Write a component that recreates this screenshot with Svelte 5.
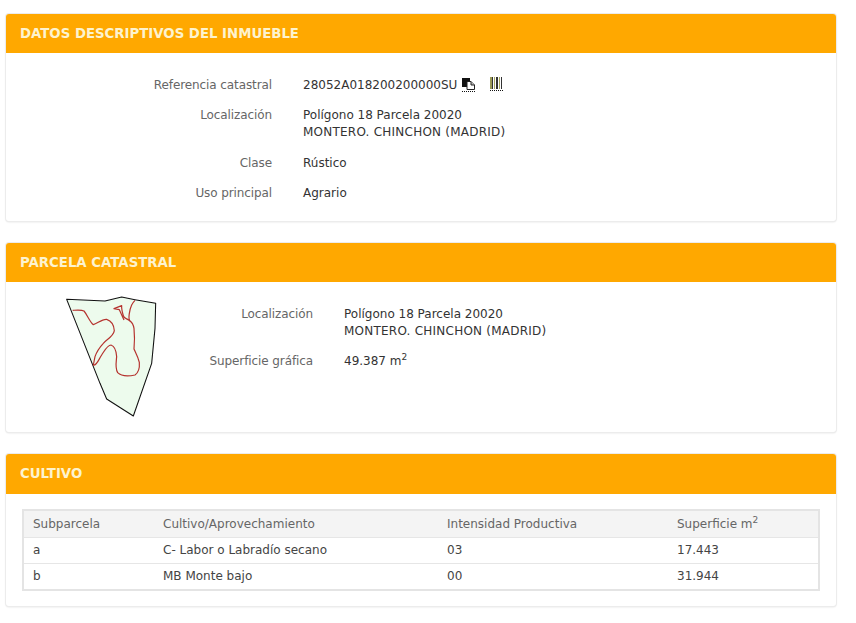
<script>
  const cropRows = [
    { sub: 'a', cultivo: 'C- Labor o Labradío secano', intensidad: '03', superficie: '17.443' },
    { sub: 'b', cultivo: 'MB Monte bajo', intensidad: '00', superficie: '31.944' }
  ];
  const bars = [
    [0, 2, '#9a9a55'], [2, 1, '#333'], [4, 1, '#a8a860'], [6, 2, '#333'], [9, 1, '#a8a860'], [11, 1, '#333']
  ];
</script>

<main class="page">
  <section class="card">
    <h2>DATOS DESCRIPTIVOS DEL INMUEBLE</h2>
    <dl class="fields first">
      <dt>Referencia catastral</dt>
      <dd class="ref">
        <span>28052A018200200000SU</span>
        <a class="icon copy" href="#copy" aria-label="Copiar">
          <svg width="13" height="12" viewBox="0 0 13 12">
            <rect x="0" y="0" width="8" height="9" fill="#111" />
            <path d="M5 3.5h4l3.5 3.5v4.5H5z" fill="#fff" stroke="#222" stroke-width="1" />
            <path d="M9 3.5V7h3.5" fill="#bbb" stroke="#222" stroke-width="1" />
          </svg>
        </a>
        <a class="icon barcode" href="#barcode" aria-label="Código de barras">
          <svg width="13" height="12" viewBox="0 0 13 12">
            {#each bars as b}
              <rect x={b[0]} y="0" width={b[1]} height="12" fill={b[2]} />
            {/each}
          </svg>
        </a>
      </dd>
      <dt>Localización</dt>
      <dd class="two">Polígono 18 Parcela 20020<br /><span class="caps">MONTERO. CHINCHON (MADRID)</span></dd>
      <dt>Clase</dt>
      <dd>Rústico</dd>
      <dt>Uso principal</dt>
      <dd>Agrario</dd>
    </dl>
  </section>

  <section class="card">
    <h2>PARCELA CATASTRAL</h2>
    <div class="parcel">
      <svg class="map" width="120" height="140" viewBox="0 0 360 420">
        <path d="M50 43L165 48L215 36L255 44L317 55L315 130L305 235L250 393L170 342L150 295Z" fill="#edfbed" stroke="#111" stroke-width="3.2" stroke-linejoin="round" />
        <path d="M68 76C85 75 95 74 102 78C112 90 120 112 130 119C142 116 155 102 170 103C185 108 192 122 193 137C190 155 170 163 160 175C148 188 140 200 135 215L130 240C140 243 145 225 155 210C165 195 172 180 183 180C195 184 199 200 200 215C198 235 195 250 203 263C215 275 235 274 255 270C266 262 269 245 268 232C264 215 258 205 252 192C254 170 254 150 252 130C250 118 246 112 240 108C234 102 238 75 245 60C248 54 251 50 255 46" fill="none" stroke="#b5332f" stroke-width="3.6" stroke-linejoin="round" />
        <path d="M240 108C232 100 222 102 220 92C217 82 214 72 215 62L192 71L208 74L222 105" fill="none" stroke="#b5332f" stroke-width="3.6" stroke-linejoin="round" />
      </svg>
      <dl class="fields second">
        <dt>Localización</dt>
        <dd>Polígono 18 Parcela 20020<br /><span class="caps">MONTERO. CHINCHON (MADRID)</span></dd>
        <dt>Superficie gráfica</dt>
        <dd>49.387 m<sup>2</sup></dd>
      </dl>
    </div>
  </section>

  <section class="card">
    <h2 class="tall">CULTIVO</h2>
    <div class="table-wrap">
      <table>
        <thead>
          <tr>
            <th class="c1">Subparcela</th>
            <th class="c2">Cultivo/Aprovechamiento</th>
            <th class="c3">Intensidad Productiva</th>
            <th>Superficie m<sup>2</sup></th>
          </tr>
        </thead>
        <tbody>
          {#each cropRows as row}
            <tr>
              <td>{row.sub}</td>
              <td>{row.cultivo}</td>
              <td>{row.intensidad}</td>
              <td>{row.superficie}</td>
            </tr>
          {/each}
        </tbody>
      </table>
    </div>
  </section>
</main>

<style>
  :global(body) {
    margin: 0;
    background: #fff;
  }
  .page {
    box-sizing: border-box;
    width: 856px;
    padding: 14px 20px 0 6px;
    font-family: "DejaVu Sans", Verdana, sans-serif;
    font-size: 12px;
    line-height: 17px;
    color: #333;
  }
  .card {
    margin-bottom: 22px;
    background: #fff;
    border-radius: 3px;
    box-shadow: 0 0 0 1px #ececec, 0 1px 2px #d8d8d8;
    overflow: hidden;
  }
  h2 {
    margin: 0;
    height: 39px;
    padding-left: 14px;
    background: #ffa800;
    color: #fdf3cf;
    font-size: 13.3px;
    font-weight: 700;
    line-height: 39px;
  }
  h2.tall {
    height: 40px;
  }
  .fields {
    display: grid;
    margin: 0;
    row-gap: 13px;
    column-gap: 31px;
    align-items: start;
    align-content: start;
  }
  .fields.first {
    grid-template-columns: 266px 1fr;
    padding: 24px 0 19px;
  }
  .fields.second {
    grid-template-columns: 157px 1fr;
  }
  dt {
    text-align: right;
    color: #666;
    font-weight: 400;
    letter-spacing: -0.1px;
  }
  dd {
    margin: 0;
    color: #333;
  }
  .two {
    padding-bottom: 1px;
  }
  .caps {
    letter-spacing: 0.23px;
  }
  sup {
    font-size: 9px;
    line-height: 0;
  }
  .ref {
    display: flex;
    align-items: flex-start;
  }
  .icon {
    display: block;
    height: 13px;
    margin-top: 1px;
    border-bottom: 1px dotted #111;
    line-height: 0;
  }
  .copy {
    margin-left: 5px;
  }
  .barcode {
    margin-top: 0;
    margin-left: 15px;
  }
  .parcel {
    display: flex;
    height: 150px;
  }
  .map {
    flex: none;
    margin: 3px 0 0 44px;
  }
  .second {
    margin: 24px 0 0 -14px;
  }
  .table-wrap {
    padding: 15px 16px 15px;
  }
  table {
    box-sizing: border-box;
    width: 798px;
    border-collapse: collapse;
    border: 2px solid #e4e4e4;
    table-layout: fixed;
  }
  th, td {
    padding: 0 9px;
    text-align: left;
    font-weight: 400;
    color: #444;
    border-bottom: 1px solid #e6e6e6;
  }
  th {
    height: 26px;
    background: #f4f4f4;
    color: #666;
  }
  td {
    height: 25px;
  }
  .c1 { width: 112px; }
  .c2 { width: 266px; }
  .c3 { width: 212px; }
</style>
